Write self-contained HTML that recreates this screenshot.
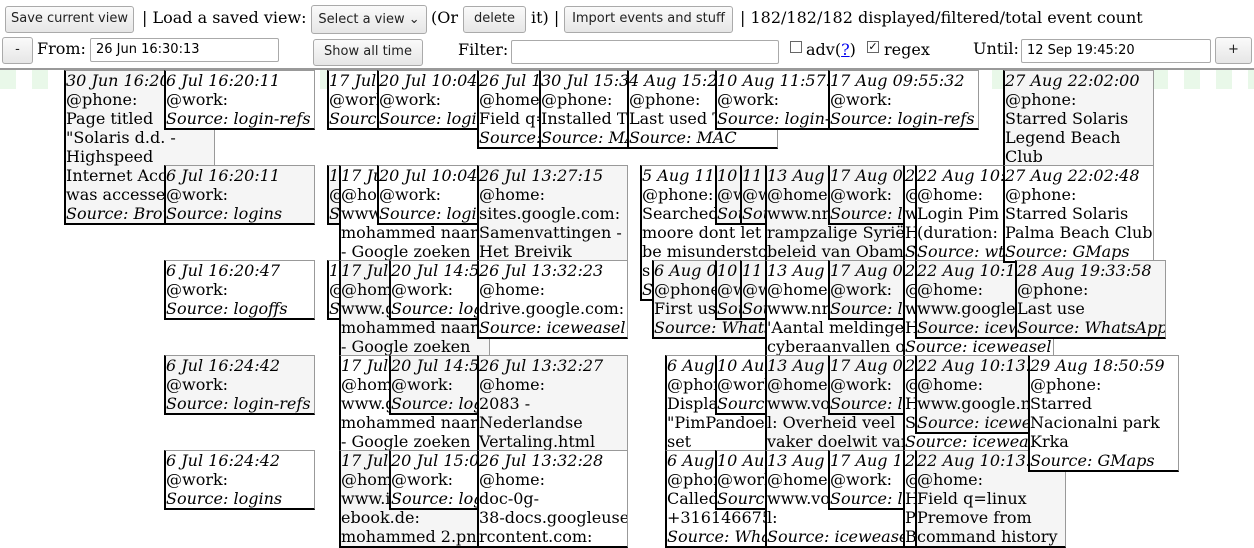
<!DOCTYPE html>
<html><head><meta charset="utf-8"><style>
body{margin:0;width:1254px;height:542px;overflow:hidden;background:#fff;font:16px/19px "DejaVu Serif",serif;color:#000;position:relative}
.a{position:absolute;white-space:nowrap}
.btn{position:absolute;box-sizing:border-box;border:1px solid #aaa;border-radius:3px;background:linear-gradient(#fafafa,#e6e6e6);font:13px "DejaVu Sans",sans-serif;color:#222;text-align:center;line-height:24px}
.inp{position:absolute;box-sizing:border-box;border:1px solid #aaa;border-radius:2px;background:#fff;font:13px "DejaVu Sans",sans-serif;padding-left:5px;line-height:21px}
.cb{position:absolute;width:10px;height:10px;border:1px solid #666;background:#fff;font:11px/10px "DejaVu Sans",sans-serif;text-align:center}
#stripes{position:absolute;left:0;top:70px;width:1254px;height:19px;background:repeating-linear-gradient(90deg,#e9f8e9 0 16px,transparent 16px 32px)}
#hr{position:absolute;left:0;top:68px;width:1254px;height:2px;background:#999}
.b{position:absolute;width:148px;box-sizing:content-box;border:1px solid #999;border-left:2px solid #000;border-bottom:2px solid #000;white-space:nowrap;overflow:hidden;background:#fff}
.g{background:#f5f5f5}
.b i{font-style:italic}
</style></head><body>
<div class="btn" style="left:5px;top:6px;width:129px;height:27px">Save current view</div>
<div class="a" style="left:142px;top:8px">| Load a saved view:</div>
<div class="btn" style="left:311px;top:5px;width:116px;height:29px;line-height:27px">Select a view &#8964;</div>
<div class="a" style="left:431px;top:8px">(Or</div>
<div class="btn" style="left:463px;top:6px;width:63px;height:27px">delete</div>
<div class="a" style="left:531px;top:8px">it) |</div>
<div class="btn" style="left:564px;top:6px;width:169px;height:27px">Import events and stuff</div>
<div class="a" style="left:740px;top:8px">| 182/182/182 displayed/filtered/total event count</div>

<div class="btn" style="left:2px;top:37px;width:31px;height:27px">-</div>
<div class="a" style="left:37px;top:39px">From:</div>
<div class="inp" style="left:90px;top:38px;width:189px;height:24px">26 Jun 16:30:13</div>
<div class="btn" style="left:313px;top:39px;width:110px;height:27px">Show all time</div>
<div class="a" style="left:458px;top:40px">Filter:</div>
<div class="inp" style="left:511px;top:40px;width:268px;height:24px"></div>
<div class="cb" style="left:790px;top:41px"></div>
<div class="a" style="left:806px;top:40px">adv(<span style="color:#00e;text-decoration:underline">?</span>)</div>
<div class="cb" style="left:867px;top:41px">&#10003;</div>
<div class="a" style="left:884px;top:40px">regex</div>
<div class="a" style="left:973px;top:39px">Until:</div>
<div class="inp" style="left:1021px;top:39px;width:190px;height:24px">12 Sep 19:45:20</div>
<div class="btn" style="left:1215px;top:37px;width:37px;height:27px">+</div>

<div id="hr"></div>
<div id="stripes"></div>

<div class="b g" style="left:64px;top:70px"><i>30 Jun 16:20:05</i><br>@phone:<br>Page titled<br>"Solaris d.d. -<br>Highspeed<br>Internet Access<br>was accessed<br><i>Source: Browser</i></div>
<div class="b" style="left:164px;top:70px"><i>6 Jul 16:20:11</i><br>@work:<br><i>Source: login-refs</i></div>
<div class="b g" style="left:164px;top:165px"><i>6 Jul 16:20:11</i><br>@work:<br><i>Source: logins</i></div>
<div class="b" style="left:164px;top:260px"><i>6 Jul 16:20:47</i><br>@work:<br><i>Source: logoffs</i></div>
<div class="b g" style="left:164px;top:355px"><i>6 Jul 16:24:42</i><br>@work:<br><i>Source: login-refs</i></div>
<div class="b" style="left:164px;top:450px"><i>6 Jul 16:24:42</i><br>@work:<br><i>Source: logins</i></div>

<div class="b" style="left:327px;top:70px"><i>17 Jul 09:12:01</i><br>@work:<br><i>Source: login-refs</i></div>
<div class="b g" style="left:327px;top:165px"><i>17 Jul 09:12:01</i><br>@work:<br><i>Source: logins</i></div>
<div class="b" style="left:339px;top:165px"><i>17 Jul 13:20:11</i><br>@home:<br>www.google.nl:<br>mohammed naar<br>- Google zoeken</div>
<div class="b" style="left:327px;top:260px"><i>17 Jul 09:30:11</i><br>@work:<br><i>Source: logoffs</i></div>
<div class="b g" style="left:339px;top:260px"><i>17 Jul 13:20:40</i><br>@home:<br>www.google.nl:<br>mohammed naar<br>- Google zoeken</div>
<div class="b" style="left:339px;top:355px"><i>17 Jul 13:21:02</i><br>@home:<br>www.google.nl:<br>mohammed naar<br>- Google zoeken</div>
<div class="b g" style="left:339px;top:450px"><i>17 Jul 13:25:40</i><br>@home:<br>www.i<br>ebook.de:<br>mohammed 2.png</div>

<div class="b" style="left:377px;top:70px"><i>20 Jul 10:04:11</i><br>@work:<br><i>Source: login-refs</i></div>
<div class="b" style="left:377px;top:165px"><i>20 Jul 10:04:11</i><br>@work:<br><i>Source: logins</i></div>
<div class="b" style="left:389px;top:260px"><i>20 Jul 14:50:02</i><br>@work:<br><i>Source: logoffs</i></div>
<div class="b g" style="left:389px;top:355px"><i>20 Jul 14:58:11</i><br>@work:<br><i>Source: login-refs</i></div>
<div class="b" style="left:389px;top:450px"><i>20 Jul 15:01:40</i><br>@work:<br><i>Source: logins</i></div>

<div class="b" style="left:477px;top:70px"><i>26 Jul 12:01:00</i><br>@home:<br>Field q=linux<br><i>Source: Firefox</i></div>
<div class="b g" style="left:477px;top:165px"><i>26 Jul 13:27:15</i><br>@home:<br>sites.google.com:<br>Samenvattingen -<br>Het Breivik</div>
<div class="b" style="left:477px;top:260px"><i>26 Jul 13:32:23</i><br>@home:<br>drive.google.com:<br><i>Source: iceweasel</i></div>
<div class="b g" style="left:477px;top:355px"><i>26 Jul 13:32:27</i><br>@home:<br>2083 -<br>Nederlandse<br>Vertaling.html</div>
<div class="b" style="left:477px;top:450px"><i>26 Jul 13:32:28</i><br>@home:<br>doc-0g-<br>38-docs.googleuse<br>rcontent.com:</div>

<div class="b" style="left:539px;top:70px"><i>30 Jul 15:34:10</i><br>@phone:<br>Installed T<br><i>Source: MAC</i></div>
<div class="b" style="left:627px;top:70px"><i>4 Aug 15:22:01</i><br>@phone:<br>Last used T<br><i>Source: MAC</i></div>
<div class="b" style="left:640px;top:165px"><i>5 Aug 11:02:00</i><br>@phone:<br>Searched<br>moore dont let<br>be misunderstood<br>s<br><i>Source</i></div>
<div class="b g" style="left:652px;top:260px"><i>6 Aug 09:10:00</i><br>@phone:<br>First use<br><i>Source: WhatsApp</i></div>
<div class="b" style="left:665px;top:355px"><i>6 Aug 10:11:00</i><br>@phone:<br>Display<br>"PimPandoe<br>set</div>
<div class="b" style="left:665px;top:450px"><i>6 Aug 10:12:00</i><br>@phone:<br>Called<br>+316146675<br><i>Source: WhatsApp</i></div>

<div class="b" style="left:715px;top:70px"><i>10 Aug 11:57:01</i><br>@work:<br><i>Source: login-refs</i></div>
<div class="b g" style="left:715px;top:165px"><i>10 Aug</i><br>@work:<br><i>Source: logins</i></div>
<div class="b g" style="left:715px;top:260px"><i>10 Aug</i><br>@work:<br><i>Source: logoffs</i></div>
<div class="b" style="left:715px;top:355px"><i>10 Aug 12:00</i><br>@work:<br><i>Source: login</i></div>
<div class="b" style="left:715px;top:450px"><i>10 Aug 12:01</i><br>@work:<br><i>Source: login</i></div>
<div class="b g" style="left:740px;top:165px"><i>11 Aug</i><br>@work:<br><i>Source: logins</i></div>
<div class="b g" style="left:740px;top:260px"><i>11 Aug</i><br>@work:<br><i>Source: logoffs</i></div>

<div class="b g" style="left:765px;top:165px"><i>13 Aug 10:00:00</i><br>@home:<br>www.nrc.nl:<br>rampzalige Syrië<br>beleid van Obama</div>
<div class="b" style="left:765px;top:260px"><i>13 Aug 10:01:00</i><br>@home:<br>www.nrc.nl:<br>'Aantal meldingen<br>cyberaanvallen o</div>
<div class="b g" style="left:765px;top:355px"><i>13 Aug 10:02:00</i><br>@home:<br>www.volkskrant.n<br>l: Overheid veel<br>vaker doelwit van</div>
<div class="b" style="left:765px;top:450px"><i>13 Aug 10:03:00</i><br>@home:<br>www.volkskrant.n<br>l:<br><i>Source: iceweasel</i></div>

<div class="b" style="left:828px;top:70px"><i>17 Aug 09:55:32</i><br>@work:<br><i>Source: login-refs</i></div>
<div class="b g" style="left:828px;top:165px"><i>17 Aug 09:55:32</i><br>@work:<br><i>Source: logins</i></div>
<div class="b g" style="left:828px;top:260px"><i>17 Aug 09:58:00</i><br>@work:<br><i>Source: logoffs</i></div>
<div class="b g" style="left:828px;top:355px"><i>17 Aug 09:59:00</i><br>@work:<br><i>Source: login</i></div>
<div class="b" style="left:828px;top:450px"><i>17 Aug 10:00:00</i><br>@work:<br><i>Source: login</i></div>

<div class="b" style="left:903px;top:165px"><i>22 Aug 10:00</i><br>@home:<br>www<br>H<br><i>Source: wtmp</i></div>
<div class="b" style="left:903px;top:260px"><i>22 Aug 10:10</i><br>@home:<br>www<br>H<br><i>Source: iceweasel</i></div>
<div class="b" style="left:903px;top:355px"><i>22 Aug 10:12</i><br>@home:<br>H<br>S<br><i>Source: iceweasel</i></div>
<div class="b" style="left:903px;top:450px"><i>22 Aug 10:13</i><br>@home:<br>H<br>Premove<br>B</div>
<div class="b" style="left:915px;top:165px"><i>22 Aug 10:05:00</i><br>@home:<br>Login Pim<br>(duration:<br><i>Source: wtmp</i></div>
<div class="b g" style="left:915px;top:260px"><i>22 Aug 10:11:00</i><br>@home:<br>www.google.nl<br><i>Source: iceweasel</i></div>
<div class="b g" style="left:915px;top:355px"><i>22 Aug 10:13:01</i><br>@home:<br>www.google.nl<br><i>Source: iceweasel</i></div>
<div class="b g" style="left:915px;top:450px"><i>22 Aug 10:13:40</i><br>@home:<br>Field q=linux<br>Premove from<br>command history</div>

<div class="b g" style="left:1003px;top:70px"><i>27 Aug 22:02:00</i><br>@phone:<br>Starred Solaris<br>Legend Beach<br>Club</div>
<div class="b" style="left:1003px;top:165px"><i>27 Aug 22:02:48</i><br>@phone:<br>Starred Solaris<br>Palma Beach Club<br><i>Source: GMaps</i></div>
<div class="b g" style="left:1015px;top:260px"><i>28 Aug 19:33:58</i><br>@phone:<br>Last use<br><i>Source: WhatsApp</i></div>
<div class="b" style="left:1028px;top:355px"><i>29 Aug 18:50:59</i><br>@phone:<br>Starred<br>Nacionalni park<br>Krka<br><i>Source: GMaps</i></div>
</body></html>
